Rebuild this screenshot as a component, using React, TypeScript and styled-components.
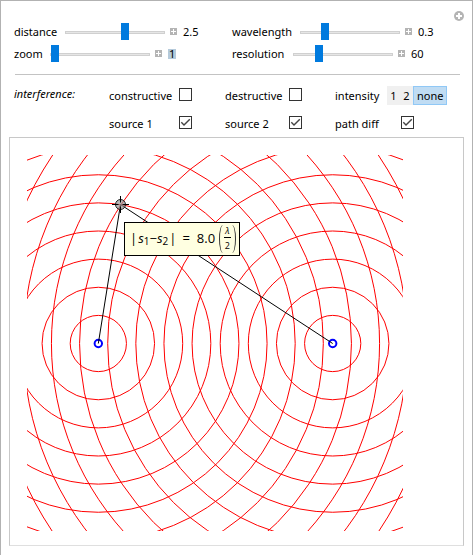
import React, { useState } from "react";
import styled, { createGlobalStyle } from "styled-components";

const GlobalStyle = createGlobalStyle`
  * { box-sizing: border-box; }
  body {
    margin: 0;
    background: #fff;
    color: #000;
    font: 11px/16px "Segoe UI", "Noto Sans", sans-serif;
  }
`;

const Frame = styled.main`
  border: 1px solid #b2b2b2;
  padding: 10px 8px 9px;
`;

const Header = styled.header`
  display: flex;
  align-items: flex-start;
  padding-left: 5px;
`;

const Sliders = styled.div`
  flex: 1;
  display: grid;
  grid-template-columns: 218px 1fr;
  grid-auto-rows: 22px;
  padding-top: 10px;
`;

const SliderRow = styled.div`
  display: flex;
  align-items: center;
`;

const SliderLabel = styled.label<{ $width: number }>`
  width: ${(p) => p.$width}px;
  white-space: nowrap;
`;

const Range = styled.input`
  appearance: none;
  width: 100px;
  height: 17px;
  margin: 1px 5px 0 0;
  background: transparent;

  &::-webkit-slider-runnable-track {
    height: 3px;
    border: 1px solid #d0d0d0;
    background: #e6e6e6;
  }
  &::-webkit-slider-thumb {
    appearance: none;
    width: 8px;
    height: 17px;
    margin-top: -9px;
    background: #007ade;
  }
`;

const IconButton = styled.button`
  display: flex;
  padding: 0 0 1px;
  border: 0;
  background: none;
`;

const Value = styled.output<{ $selected?: boolean }>`
  margin-left: 6px;
  padding: 0 ${(p) => (p.$selected ? 1 : 0)}px;
  line-height: ${(p) => (p.$selected ? 10 : 16)}px;
  background: ${(p) => (p.$selected ? "#b5cadb" : "transparent")};
`;

const Divider = styled.hr`
  height: 1px;
  margin: 9px 4px 0 6px;
  border: 0;
  background: #c3c3c3;
`;

const Options = styled.div`
  display: grid;
  grid-template-columns: 95px 70px 46px 64px 46px 52px auto;
  grid-template-rows: 28px 28px;
  align-items: center;
  justify-content: start;
  padding: 6px 0 0 5px;
`;

const Caption = styled.em`
  align-self: start;
  margin-top: 5px;
`;

const OptionLabel = styled.label<{ $newRow?: boolean }>`
  padding-top: 2px;
  white-space: nowrap;
  ${(p) => p.$newRow && "grid-column-start: 2;"}
`;

const Check = styled.input<{ $inset?: boolean }>`
  appearance: none;
  width: 13px;
  height: 13px;
  margin: 0 0 1px ${(p) => (p.$inset ? 14 : 0)}px;
  border: 1px solid #333;
  background: #fff;

  &:checked {
    background: #fff
      url("data:image/svg+xml,%3Csvg xmlns='http://www.w3.org/2000/svg' viewBox='0 0 11 11'%3E%3Cpath d='M1.3 5.3 4 8 9.8 2.2' fill='none' stroke='%23444' stroke-width='1.4'/%3E%3C/svg%3E")
      center / 11px 11px;
  }
`;

const Setter = styled.div`
  display: flex;
  background: #f0f0f0;
`;

const SetterButton = styled.button<{ $active: boolean }>`
  padding: 1px 2px 0;
  height: 19px;
  min-width: 13px;
  border: 1px solid ${(p) => (p.$active ? "#90c8f6" : "transparent")};
  background: ${(p) => (p.$active ? "#c0dcf3" : "transparent")};
  color: inherit;
  font: inherit;

  &:last-child {
    padding: 1px 3px 0;
  }
`;

const Panel = styled.section`
  border: 1px solid #c8c8c8;
  border-bottom-color: #dfdfdf;
  padding: 17px 17px 14px;
`;

const Plot = styled.div`
  position: relative;
  max-width: 376px;
`;

const Drawing = styled.svg`
  display: block;
  width: 100%;
`;

const Tooltip = styled.div`
  position: absolute;
  left: 97px;
  top: 67px;
  display: flex;
  align-items: center;
  height: 34px;
  padding: 0 3px 0 4px;
  border: 1px solid #000;
  background: #ffffe1;
  font: 13px/18px "Segoe UI", "Open Sans", sans-serif;
  white-space: nowrap;
`;

const Term = styled.span`
  padding-bottom: 3px;
`;

const Sub = styled.sub`
  font-size: 10px;
  line-height: 10px;
  vertical-align: -2px;
`;

const Bar = styled.span`
  margin: 0 1px;
`;

const Equals = styled(Term)`
  margin: 0 7px 0 5px;
`;

const Paren = styled.span<{ $side: "left" | "right" }>`
  width: 4px;
  height: 28px;
  margin-left: ${(p) => (p.$side === "left" ? 4 : 1)}px;
  border: 0 solid #333;
  border-${(p) => p.$side}-width: 1px;
  border-radius: ${(p) => (p.$side === "left" ? "4px 0 0 4px" : "0 4px 4px 0")} / 14px;
`;

const Fraction = styled.span`
  display: flex;
  flex-direction: column;
  align-items: center;
  margin-left: 1px;
  font-size: 9px;
  line-height: 15px;
`;

const Numerator = styled.i`
  padding: 0 1px;
  border-bottom: 1px solid #000;
  line-height: 12px;
`;

type SliderProps = {
  id: string;
  width: number;
  min: number;
  max: number;
  step: number;
  value: number;
  selected?: boolean;
  digits: number;
  onChange: (v: number) => void;
};

function Slider({ id, width, min, max, step, value, selected, digits, onChange }: SliderProps) {
  return (
    <SliderRow>
      <SliderLabel htmlFor={id} $width={width}>{id}</SliderLabel>
      <Range
        id={id}
        type="range"
        min={min}
        max={max}
        step={step}
        value={value}
        onChange={(e) => onChange(Number(e.target.value))}
      />
      <IconButton aria-label={`More ${id} controls`}>
        <svg width="7" height="7" viewBox="0 0 7 7" shapeRendering="crispEdges">
          <path d="M0 0h7v7H0z" fill="#b4b4b4" />
          <path d="M3 1h1v2h2v1H4v2H3V4H1V3h2z" fill="#fff" />
        </svg>
      </IconButton>
      <Value htmlFor={id} $selected={selected}>{value.toFixed(digits)}</Value>
    </SliderRow>
  );
}

const UNIT = 93.75;
const CENTER = 188.5;
const POINT = { x: 93.5, y: 49.5 };

export default function App() {
  const [distance, setDistance] = useState(2.5);
  const [wavelength, setWavelength] = useState(0.3);
  const [zoom, setZoom] = useState(1);
  const [resolution, setResolution] = useState(60);
  const [checks, setChecks] = useState({
    constructive: false,
    destructive: false,
    "source 1": true,
    "source 2": true,
    "path diff": true,
  });
  const [intensity, setIntensity] = useState("none");

  const unit = UNIT * zoom;
  const left = CENTER - (distance / 2) * unit;
  const right = CENTER + (distance / 2) * unit;
  const rings = Array.from({ length: Math.ceil(3.8 / wavelength) }, (_, i) => (i + 1) * wavelength * unit);
  const pathDifference = Math.abs(
    Math.hypot(POINT.x - left, POINT.y - CENTER) - Math.hypot(POINT.x - right, POINT.y - CENTER),
  );

  const option = (name: keyof typeof checks, extra: { newRow?: boolean; inset?: boolean } = {}) => (
    <>
      <OptionLabel htmlFor={name} $newRow={extra.newRow}>{name}</OptionLabel>
      <Check
        id={name}
        type="checkbox"
        checked={checks[name]}
        $inset={extra.inset}
        onChange={(e) => setChecks({ ...checks, [name]: e.target.checked })}
      />
    </>
  );

  return (
    <>
      <GlobalStyle />
      <Frame>
        <Header>
          <Sliders>
            <Slider id="distance" width={51} min={0.1} max={4} step={0.1} value={distance} digits={1} onChange={setDistance} />
            <Slider id="wavelength" width={68} min={0.1} max={1} step={0.1} value={wavelength} digits={1} onChange={setWavelength} />
            <Slider id="zoom" width={36} min={1} max={4} step={1} value={zoom} digits={0} selected onChange={setZoom} />
            <Slider id="resolution" width={61} min={10} max={220} step={10} value={resolution} digits={0} onChange={setResolution} />
          </Sliders>
          <IconButton aria-label="Options">
            <svg width="10" height="10" viewBox="0 0 10 10">
              <circle cx="5" cy="5" r="5" fill="#b4b4b4" />
              <path d="M5 2v6M2 5h6" stroke="#fff" strokeWidth="2" />
            </svg>
          </IconButton>
        </Header>
        <Divider />
        <Options>
          <Caption>interference:</Caption>
          {option("constructive")}
          {option("destructive")}
          <OptionLabel as="span" id="intensity">intensity</OptionLabel>
          <Setter role="group" aria-labelledby="intensity">
            {["1", "2", "none"].map((name) => (
              <SetterButton
                key={name}
                $active={intensity === name}
                aria-pressed={intensity === name}
                onClick={() => setIntensity(name)}
              >
                {name}
              </SetterButton>
            ))}
          </Setter>
          {option("source 1", { newRow: true })}
          {option("source 2")}
          {option("path diff", { inset: true })}
        </Options>
        <Panel>
          <Plot>
            <Drawing viewBox="0 0 376 376" role="img" aria-label="Two-source wave fronts">
              <g fill="none" stroke="#f00">
                {checks["source 1"] && rings.map((r) => <circle key={r} cx={left} cy={CENTER} r={r} />)}
                {checks["source 2"] && rings.map((r) => <circle key={r} cx={right} cy={CENTER} r={r} />)}
              </g>
              <g fill="none" stroke="#00f" strokeWidth="2">
                <circle cx={left} cy={CENTER} r="3.7" />
                <circle cx={right} cy={CENTER} r="3.7" />
              </g>
              {checks["path diff"] && (
                <path d={`M${left} ${CENTER}L${POINT.x} ${POINT.y}L${right} ${CENTER}`} fill="none" stroke="#000" />
              )}
              <circle cx={POINT.x} cy={POINT.y} r="5" fill="#999" fillOpacity="0.7" stroke="#222" />
              <path
                d={`M${POINT.x - 8.5} ${POINT.y}h6.5m4 0h6.5M${POINT.x} ${POINT.y - 8.5}v6.5m0 4v6.5`}
                stroke="#000"
              />
            </Drawing>
            {checks["path diff"] && (
              <Tooltip role="tooltip">
                <Term>
                  <Bar>|</Bar><i>s</i><Sub>1</Sub>−<i>s</i><Sub>2</Sub><Bar>|</Bar>
                </Term>
                <Equals>=</Equals>
                <Term>{(pathDifference / unit / (wavelength / 2)).toFixed(1)}</Term>
                <Paren $side="left" />
                <Fraction>
                  <Numerator>λ</Numerator>
                  <span>2</span>
                </Fraction>
                <Paren $side="right" />
              </Tooltip>
            )}
          </Plot>
        </Panel>
      </Frame>
    </>
  );
}
